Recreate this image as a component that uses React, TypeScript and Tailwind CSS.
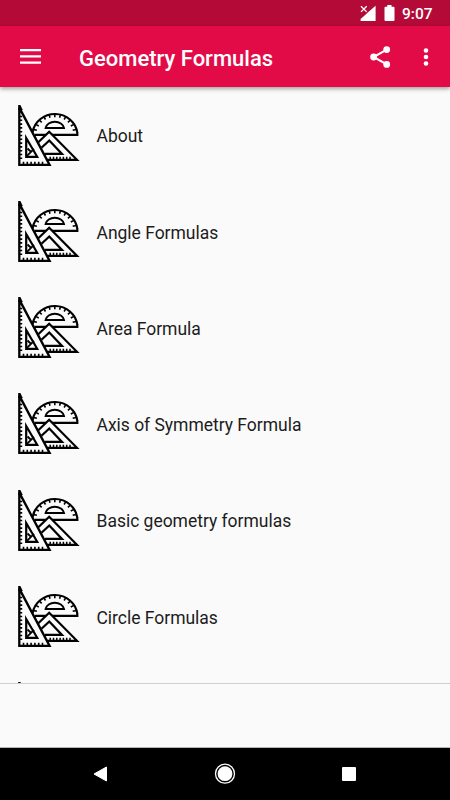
const formulas = [
  "About",
  "Angle Formulas",
  "Area Formula",
  "Axis of Symmetry Formula",
  "Basic geometry formulas",
  "Circle Formulas",
];

const GeometryIcon = () => (
  <svg
    className="h-[62px] w-[62px] shrink-0 overflow-visible"
    viewBox="0 0 62 62"
    fill="none"
    stroke="#000"
    strokeWidth="2.2"
  >
    {/* protractor */}
    <path d="M15.6 27 A22.6 21.5 0 0 1 60.3 27.7 V29.9 H18" />
    <path d="M28.6 23 A9.3 7.4 0 0 1 47 23 Z" strokeWidth="1.9" />
    <path
      d="M59.1 24.4L55.7 25.3M56.9 19.4L53.8 21M53.4 15L50.9 17.4M48.8 11.7L47.1 14.5M43.5 9.6L42.6 12.8M37.8 8.9V12.2M32.1 9.6L33 12.8M26.8 11.7L28.5 14.5M22.2 15L24.7 17.4M18.7 19.4L21.8 21M16.5 24.4L19.9 25.3"
      strokeWidth="1.6"
    />
    {/* wide set square */}
    <path d="M20.5 38 L32.2 26.8 L60 54.8 H30" fill="#fafafa" />
    <path d="M24.5 42.8 L32.3 35.5 L45 48.9 H28" />
    <path
      d="M33.2 55v-3.2M36.5 55v-3.2M39.8 55v-3.2M43.1 55v-3.2M46.4 55v-3.2M49.7 55v-3.2M53 55v-3.2"
      strokeWidth="1.5"
    />
    {/* tall set square */}
    <path d="M2.3 2.6 V59.9 H32.6 Z" fill="#fafafa" strokeWidth="2.3" />
    <path d="M1.2 0 H3.4 L5.8 5 H1.2 Z" fill="#000" stroke="none" />
    <path d="M9.2 33 V51.8 H20.2 Z" />
    <path d="M9.5 51.3 L17 43.8 M10.5 43.5 L14.2 47" strokeWidth="1.8" />
    <path
      d="M2 11.5h3.2M2 15.3h3.2M2 19.1h3.2M2 22.9h3.2M2 26.7h3.2M2 30.5h3.2M2 34.3h3.2M2 38.1h3.2M2 41.9h3.2M2 45.7h3.2M2 49.5h3.2M2 53.3h3.2M6.5 60v-3.2M10.3 60v-3.2M14.1 60v-3.2M17.9 60v-3.2M21.7 60v-3.2M25.5 60v-3.2"
      strokeWidth="1.6"
    />
  </svg>
);

const StatusBar = () => (
  <div className="flex h-[26px] shrink-0 items-center justify-end bg-[#b40a37] pr-[17.5px] text-white">
    <svg className="mr-[8px] h-4 w-4" viewBox="0 0 16 16">
      <path d="M15.6 .8 V16 H.6 V14 L6 9.3 L7.5 7.8 Z" fill="currentColor" />
      <path d="M1 1.2 L6.7 6.9 M6.7 1.2 L1 6.9" stroke="currentColor" strokeWidth="1.3" />
    </svg>
    <svg className="mr-[7.5px] h-4 w-[11px]" viewBox="0 0 11 16">
      <path
        d="M3.3 0h4.2v1.8H9.5a1 1 0 0 1 1 1V15a1 1 0 0 1-1 1h-8a1 1 0 0 1-1-1V2.8a1 1 0 0 1 1-1h1.8z"
        fill="currentColor"
      />
    </svg>
    <span className="mt-[3px] w-[30.5px] text-[15.5px] font-medium leading-none">9:07</span>
  </div>
);

const Toolbar = () => (
  <header className="relative z-10 flex h-[61px] shrink-0 items-center bg-[#e20b48] pl-5 pr-[21px] text-white shadow-[0_2px_4px_rgba(0,0,0,0.35)]">
    <svg className="h-[15px] w-[21px]" viewBox="0 0 21 15" fill="currentColor">
      <path d="M0 0h21v2.3H0zM0 6.2h21v2.3H0zM0 12.4h21v2.3H0z" />
    </svg>
    <h1 className="ml-[38px] mt-[4px] flex-1 text-[22px] font-medium leading-none">
      Geometry Formulas
    </h1>
    <svg className="mr-[32px] h-[22px] w-[21px]" viewBox="0 0 21 22">
      <path d="M16.7 3.6 L3.6 11 L16.7 18.4" fill="none" stroke="currentColor" strokeWidth="2.1" />
      <g fill="currentColor">
        <circle cx="16.7" cy="3.6" r="3.4" />
        <circle cx="3.6" cy="11" r="3.4" />
        <circle cx="16.7" cy="18.4" r="3.4" />
      </g>
    </svg>
    <svg className="h-[18px] w-[6px]" viewBox="0 0 6 18" fill="currentColor">
      <circle cx="3" cy="2.5" r="2.3" />
      <circle cx="3" cy="9" r="2.3" />
      <circle cx="3" cy="15.5" r="2.3" />
    </svg>
  </header>
);

const NavigationBar = () => (
  <nav className="grid h-[52px] shrink-0 grid-cols-[200px_50px_200px] items-center bg-black text-white">
    <svg className="ml-[93px] h-4 w-[14px]" viewBox="0 0 14 16">
      <path d="M13.5 1 V15 L1 8 Z" fill="currentColor" stroke="currentColor" strokeLinejoin="round" />
    </svg>
    <svg className="mx-auto h-[22px] w-[22px]" viewBox="0 0 22 22">
      <circle cx="11" cy="10.7" r="9.5" fill="none" stroke="currentColor" strokeWidth="1.3" />
      <circle cx="11" cy="10.7" r="7.4" fill="currentColor" />
    </svg>
    <div className="ml-[92px] h-[14px] w-[14px] rounded-[1px] bg-white" />
  </nav>
);

const App = () => {
  return (
    <div className="flex h-[800px] w-[450px] flex-col overflow-hidden bg-[#fafafa] font-[Roboto,sans-serif]">
      <StatusBar />
      <Toolbar />
      <ul className="h-[597px] shrink-0 overflow-hidden border-b border-[#cfcfcf]">
        {formulas.map((title) => (
          <li key={title} className="flex h-[96.25px] items-center pl-[17px] pt-[1px]">
            <GeometryIcon />
            <span className="ml-[17.5px] mt-[1.5px] text-[17.5px] tracking-[-0.02px] text-[#1c1c1c]">
              {title}
            </span>
          </li>
        ))}
        {/* next row, only its tip is scrolled into view */}
        <li className="pl-[17px] pt-[17px]">
          <GeometryIcon />
        </li>
      </ul>
      <div className="flex-1 border-b border-[#b5b5b5]" />
      <NavigationBar />
    </div>
  );
};

export default App;
